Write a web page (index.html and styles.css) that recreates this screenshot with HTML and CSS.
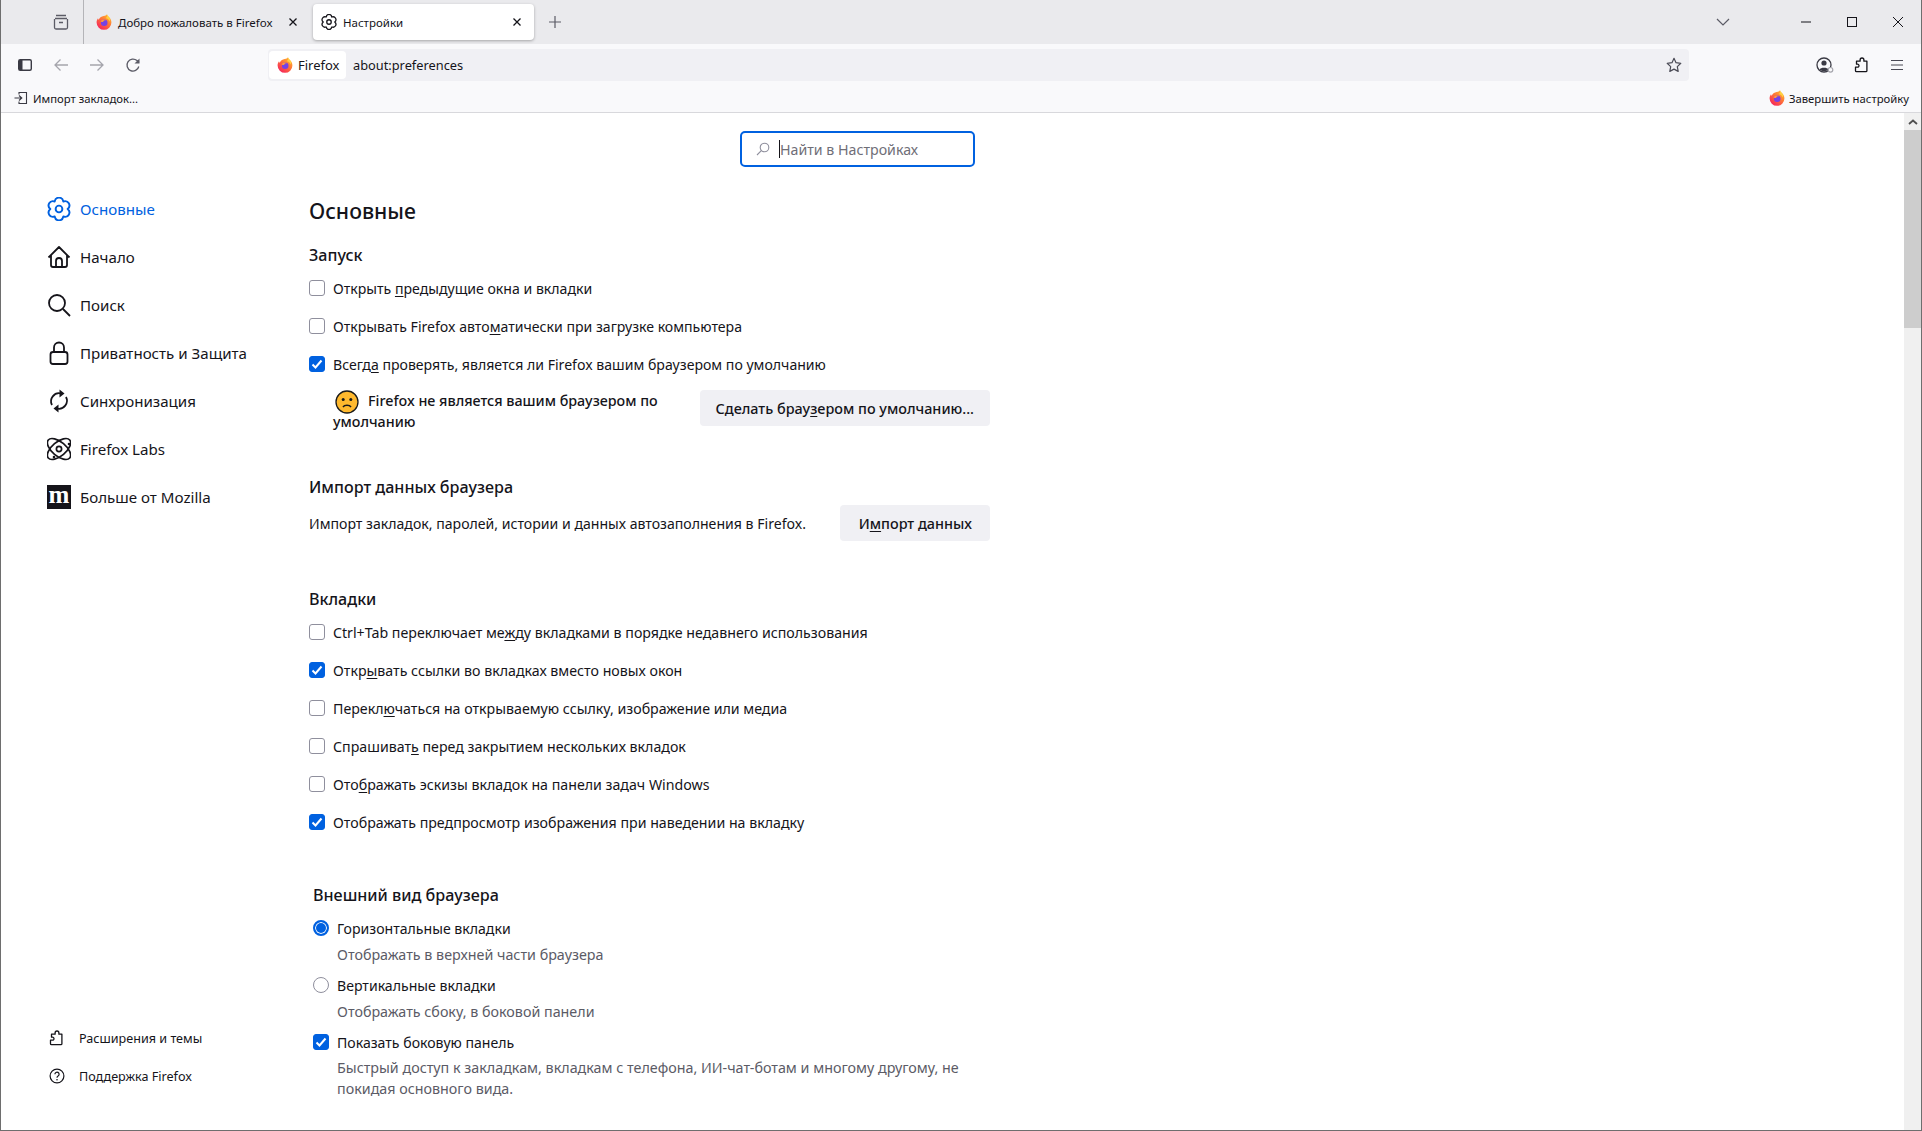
FILE: index.html
```html
<!DOCTYPE html>
<html lang="ru">
<head>
<meta charset="utf-8">
<title>Настройки</title>
<link rel="stylesheet" href="styles.css">
</head>
<body>
<svg class="defs" width="0" height="0" aria-hidden="true">
  <defs>
    <linearGradient id="fxg" x1="0.85" y1="0.1" x2="0.2" y2="0.95">
      <stop offset="0" stop-color="#ffb32e"/><stop offset="0.45" stop-color="#ff7139"/><stop offset="1" stop-color="#f5245c"/>
    </linearGradient>
    <symbol id="fx" viewBox="0 0 16 16">
      <path d="M11 .3c.2 1.5 1.5 2.100 2.400 3.300 1.200 1.300 2 2.900 2 4.800a7.400 7.400 0 1 1-14.800 0c0-1.600.5-3 1.400-4.200.1.700.4 1.200.8 1.600.4-1.700 1.700-2.900 3.300-3.400 1.900-.6 4-.4 4.900-2.100z" fill="url(#fxg)"/>
      <path d="M11 .3c.2 1.700 1.800 2.400 2.600 3.800.8 1.400.6 2.600.2 3.500-.8-2-2.300-3.200-4.300-3.500C11 3.500 11.500 2 11 .3z" fill="#ffd23f"/>
      <circle cx="8.200" cy="8.700" r="3.300" fill="#7542e5"/>
      <path d="M4.500 7.600c1-2 3.800-2.600 5.600-1.300-1.700-.2-2.700.6-2.900 1.400-.9.300-1.900.3-2.700-.1z" fill="#ff9a3c"/>
    </symbol>
    <symbol id="gear" viewBox="0.5 0.5 15 15">
      <path d="M5.300 3.320C5.900.1 10.100.1 10.700 3.320 13.790 2.230 15.890 5.870 13.400 8 15.890 10.130 13.790 13.770 10.700 12.680 10.100 15.900 5.900 15.900 5.300 12.680 2.210 13.770.11 10.130 2.600 8 .11 5.870 2.210 2.230 5.300 3.320z" fill="none" stroke="currentColor" stroke-width="1.200" stroke-linejoin="round"/>
      <circle cx="8" cy="8" r="2.100" fill="none" stroke="currentColor" stroke-width="1.200"/>
    </symbol>
    <symbol id="puzzle" viewBox="0 0 16 16">
      <path d="M1.500 10.500h2a1.500 1.500 0 0 0 0-3h-1V4.500h3.600V3.200a1.900 1.900 0 0 1 3.800 0v1.300h3v9.500a1 1 0 0 1-1 1H2.500a1 1 0 0 1-1-1z" transform="translate(0 -.3)" fill="none" stroke="currentColor" stroke-width="1.300" stroke-linejoin="round"/>
    </symbol>
  </defs>
</svg>
<div class="window">
  <header class="tabbar">
    <div class="tabbar-lead">
      <svg class="ic16" viewBox="0 0 16 16"><path d="M3 1.500h10M2 4.500h12M1.500 5v8.500a1.500 1.500 0 0 0 1.500 1.500h10a1.500 1.500 0 0 0 1.500-1.500V5M6 8.500h4" fill="none" stroke="#5b5b66" stroke-width="1.300"/></svg>
    </div>
    <div class="tab">
      <svg class="fav"><use href="#fx"/></svg>
      <span class="tab-title">Добро пожаловать в Firefox</span>
      <svg class="tab-x" viewBox="0 0 10 10"><path d="M1.500 1.500l7 7M8.500 1.500l-7 7" stroke="#15141a" stroke-width="1.300"/></svg>
    </div>
    <div class="tab tab-active">
      <svg class="fav"><use href="#gear"/></svg>
      <span class="tab-title">Настройки</span>
      <svg class="tab-x" viewBox="0 0 10 10"><path d="M1.500 1.500l7 7M8.500 1.500l-7 7" stroke="#15141a" stroke-width="1.300"/></svg>
    </div>
    <svg class="newtab" viewBox="0 0 14 14"><path d="M7 1v12M1 7h12" stroke="#5b5b66" stroke-width="1.200"/></svg>
    <div class="spacer"></div>
    <svg class="tablist" viewBox="0 0 14 8"><path d="M1 1l6 6 6-6" fill="none" stroke="#5b5b66" stroke-width="1.200"/></svg>
    <svg class="win" viewBox="0 0 10 10"><path d="M0 5h10" stroke="#15141a"/></svg>
    <svg class="win" viewBox="0 0 10 10"><rect x=".5" y=".5" width="9" height="9" fill="none" stroke="#15141a"/></svg>
    <svg class="win win-close" viewBox="0 0 10 10"><path d="M0 0l10 10M10 0L0 10" stroke="#15141a"/></svg>
  </header>

  <nav class="navbar">
    <svg class="nav-ic nav-side" viewBox="0 0 16 16"><rect x="1.700" y="2.700" width="12.600" height="10.600" rx="1.500" fill="none" stroke="#3a3a44" stroke-width="1.400"/><rect x="2" y="3" width="3.500" height="10" fill="#3a3a44"/></svg>
    <svg class="nav-ic nav-back" viewBox="0 0 16 16"><path d="M15 8H2M7.500 2.500L2 8l5.500 5.500" fill="none" stroke="#a5a5ac" stroke-width="1.300"/></svg>
    <svg class="nav-ic nav-fwd" viewBox="0 0 16 16"><path d="M1 8h13M8.500 2.500L14 8l-5.500 5.500" fill="none" stroke="#a5a5ac" stroke-width="1.300"/></svg>
    <svg class="nav-ic nav-reload" viewBox="0 0 16 16"><path d="M13.800 9.500A6 6 0 1 1 12 3.600L14 5.500" fill="none" stroke="#5b5b66" stroke-width="1.300"/><path d="M14.500 1.500v5h-5z" fill="#5b5b66"/></svg>
    <div class="urlbar">
      <div class="identity"><svg class="fav"><use href="#fx"/></svg><span>Firefox</span></div>
      <span class="url">about:preferences</span>
      <div class="spacer"></div>
      <svg class="nav-ic star" viewBox="0 0 16 16"><path d="M8 1.300l2 4.400 4.800.6-3.500 3.300.9 4.800L8 12.100l-4.200 2.300.9-4.800L1.200 6.300 6 5.700z" fill="none" stroke="#4a4a55" stroke-width="1.200" stroke-linejoin="round"/></svg>
    </div>
    <div class="spacer"></div>
    <svg class="nav-ic account" viewBox="0 0 18 16"><circle cx="8" cy="8" r="7" fill="none" stroke="#3a3a44" stroke-width="1.300"/><circle cx="8" cy="6" r="2.600" fill="#3a3a44"/><path d="M3.500 12.500c1-2.300 8-2.300 9 0-2 2-7 2-9 0z" fill="#3a3a44"/><circle cx="14.500" cy="12.800" r="2.300" fill="#f9f9fb" stroke="#a5a5ac" stroke-width="1.200"/></svg>
    <svg class="nav-ic ext"><use href="#puzzle"/></svg>
    <svg class="nav-ic menu" viewBox="0 0 14 14"><path d="M1 2.500h12M1 7h12M1 11.500h12" stroke="#4a4a55" stroke-width="1.200"/></svg>
  </nav>

  <div class="bookmarks">
    <svg class="bm-ic" viewBox="0 0 14 14"><path d="M5 3.500V1.500h7.500v11H5v-2M.5 7h7M5 4.500L7.800 7 5 9.500" fill="none" stroke="#3a3a44" stroke-width="1.100"/></svg>
    <span>Импорт закладок...</span>
    <div class="spacer"></div>
    <svg class="fav"><use href="#fx"/></svg>
    <span class="bm-finish">Завершить настройку</span>
  </div>

  <div class="main">
    <aside class="sidebar">
      <a class="cat cat-active"><svg class="cat-ic"><use href="#gear"/></svg><span>Основные</span></a>
      <a class="cat"><svg class="cat-ic" viewBox="0 0 24 24"><path d="M1.500 12.500L12 2l10.500 10.500M4 10v10a2 2 0 0 0 2 2h12a2 2 0 0 0 2-2V10M9 22v-6a3 3 0 0 1 6 0v6" fill="none" stroke="currentColor" stroke-width="1.800" stroke-linejoin="round"/></svg><span>Начало</span></a>
      <a class="cat"><svg class="cat-ic" viewBox="0 0 24 24"><circle cx="10" cy="10" r="8" fill="none" stroke="currentColor" stroke-width="1.800"/><path d="M16 16l7 7" stroke="currentColor" stroke-width="1.800"/></svg><span>Поиск</span></a>
      <a class="cat"><svg class="cat-ic" viewBox="0 0 24 24"><path d="M7 11V6.500a5 5 0 0 1 10 0V11" fill="none" stroke="currentColor" stroke-width="1.800"/><rect x="3.500" y="11" width="17" height="12" rx="2.500" fill="none" stroke="currentColor" stroke-width="1.800"/></svg><span>Приватность и Защита</span></a>
      <a class="cat"><svg class="cat-ic" viewBox="0 0 24 24"><path d="M5 16a8 8 0 0 1 9-11.500M19 8a8 8 0 0 1-9 11.500" fill="none" stroke="currentColor" stroke-width="1.800"/><path d="M12.500 .5l5 4-5 4zM11.500 15.500l-5 4 5 4z" fill="currentColor"/></svg><span>Синхронизация</span></a>
      <a class="cat"><svg class="cat-ic" viewBox="0 0 24 24"><g fill="none" stroke="currentColor" stroke-width="1.700"><ellipse cx="12" cy="12" rx="14" ry="7" transform="rotate(40 12 12)"/><ellipse cx="12" cy="12" rx="14" ry="7" transform="rotate(-40 12 12)"/><circle cx="12" cy="12" r="2.600"/></g><circle cx="22" cy="7" r="1.300" fill="currentColor"/><circle cx="7" cy="20" r="1.300" fill="currentColor"/></svg><span>Firefox Labs</span></a>
      <a class="cat"><span class="moz">m</span><span>Больше от Mozilla</span></a>
      <div class="side-foot">
        <a class="foot"><svg class="foot-ic"><use href="#puzzle"/></svg><span>Расширения и темы</span></a>
        <a class="foot"><svg class="foot-ic" viewBox="0 0 16 16"><circle cx="8" cy="8" r="6.900" fill="none" stroke="currentColor" stroke-width="1.200"/><path d="M5.900 6.200a2.100 2.100 0 1 1 3.200 1.800c-.8.500-1.100.9-1.100 1.700" fill="none" stroke="currentColor" stroke-width="1.200"/><circle cx="8" cy="11.700" r=".8" fill="currentColor"/></svg><span>Поддержка Firefox</span></a>
      </div>
    </aside>

    <section class="content">
      <div class="search">
        <svg class="search-ic" viewBox="0 0 14 14"><circle cx="8.500" cy="5.500" r="4.300" fill="none" stroke="#8f8f9d" stroke-width="1.100"/><path d="M5.300 8.700L1 13" stroke="#8f8f9d" stroke-width="1.100"/></svg>
        <span class="caret"></span>
        <span class="placeholder">Найти в Настройках</span>
      </div>

      <h1 class="page-title">Основные</h1>

      <h2 class="sec sec-start">Запуск</h2>
      <div class="rows rows-start">
        <label class="row"><span class="cb"></span><span>Открыть <u>п</u>редыдущие окна и вкладки</span></label>
        <label class="row"><span class="cb"></span><span>Открывать Firefox авто<u>м</u>атически при загрузке компьютера</span></label>
        <label class="row"><span class="cb cb-on"><svg viewBox="0 0 16 16"><path d="M3.500 8.500l3 3 6-7" fill="none" stroke="#fff" stroke-width="2"/></svg></span><span>Всегд<u>а</u> проверять, является ли Firefox вашим браузером по умолчанию</span></label>
      </div>
      <div class="note-row">
        <div class="note"><svg class="emoji" viewBox="0 0 24 24"><circle cx="12" cy="12" r="11" fill="#ffb92e" stroke="#1a1a1a" stroke-width="1.300"/><circle cx="8.200" cy="9.500" r="1.500" fill="#1a1a1a"/><circle cx="15.800" cy="9.500" r="1.500" fill="#1a1a1a"/><path d="M8 17c1.500-2.400 6.500-2.400 8 0" fill="none" stroke="#1a1a1a" stroke-width="1.500"/></svg><b>Firefox не является вашим браузером по умолчанию</b></div>
        <span class="btn">Сделать брау<u>з</u>ером по умолчанию...</span>
      </div>

      <h2 class="sec sec-import">Импорт данных браузера</h2>
      <div class="import-row">
        <span>Импорт закладок, паролей, истории и данных автозаполнения в Firefox.</span>
        <span class="btn btn-import">И<u>м</u>порт данных</span>
      </div>

      <h2 class="sec sec-tabs">Вкладки</h2>
      <div class="rows rows-tabs">
        <label class="row"><span class="cb"></span><span>Ctrl+Tab переключает ме<u>ж</u>ду вкладками в порядке недавнего использования</span></label>
        <label class="row"><span class="cb cb-on"><svg viewBox="0 0 16 16"><path d="M3.500 8.500l3 3 6-7" fill="none" stroke="#fff" stroke-width="2"/></svg></span><span>Откр<u>ы</u>вать ссылки во вкладках вместо новых окон</span></label>
        <label class="row"><span class="cb"></span><span>Перекл<u>ю</u>чаться на открываемую ссылку, изображение или медиа</span></label>
        <label class="row"><span class="cb"></span><span>Спрашиват<u>ь</u> перед закрытием нескольких вкладок</span></label>
        <label class="row"><span class="cb"></span><span>Ото<u>б</u>ражать эскизы вкладок на панели задач Windows</span></label>
        <label class="row"><span class="cb cb-on"><svg viewBox="0 0 16 16"><path d="M3.500 8.500l3 3 6-7" fill="none" stroke="#fff" stroke-width="2"/></svg></span><span>Отображать предпросмотр изображения при наведении на вкладку</span></label>
      </div>

      <div class="appearance">
        <h2 class="sec sec-look">Внешний вид браузера</h2>
        <label class="opt opt-first"><span class="rd rd-on"></span><span>Горизонтальные вкладки</span></label>
        <p class="sub">Отображать в верхней части браузера</p>
        <label class="opt"><span class="rd"></span><span>Вертикальные вкладки</span></label>
        <p class="sub">Отображать сбоку, в боковой панели</p>
        <label class="opt opt-last"><span class="cb cb-on"><svg viewBox="0 0 16 16"><path d="M3.500 8.500l3 3 6-7" fill="none" stroke="#fff" stroke-width="2"/></svg></span><span>Показать боковую панель</span></label>
        <p class="sub sub-last">Быстрый доступ к закладкам, вкладкам с телефона, ИИ-чат-ботам и многому другому, не покидая основного вида.</p>
      </div>
    </section>

    <div class="scrollbar">
      <div class="sb-up"><svg viewBox="0 0 10 6"><path d="M1 5l4-3.500L9 5" fill="none" stroke="#505050" stroke-width="1.800"/></svg></div>
      <div class="sb-thumb"></div>
    </div>
  </div>
</div>
</body>
</html>
```

FILE: styles.css
```css
* { box-sizing: border-box; }
html, body { margin: 0; padding: 0; }
body {
  font-family: "Noto Sans", "Open Sans", sans-serif;
  font-size: 14.1px;
  color: #15141a;
  background: #fff;
  overflow: hidden;
}
.defs { position: absolute; }
.spacer { flex: 1; }
u { text-underline-offset: 2px; }

.window {
  height: 1131px;
  width: 1922px;
  border: 1px solid #6e6e6e;
  border-top: 0;
  display: flex;
  flex-direction: column;
  overflow: hidden;
}

/* tab strip */
.tabbar {
  height: 44px;
  background: #eaeaed;
  display: flex;
  align-items: center;
  font-size: 11.5px;
  flex: none;
}
.tabbar-lead {
  width: 83px;
  height: 44px;
  padding-left: 52px;
  display: flex;
  align-items: center;
  border-right: 1px solid #b4b4b8;
}
.ic16 { width: 16px; height: 16px; }
.tab {
  width: 216px;
  height: 36px;
  margin-left: 8px;
  padding: 0 10px 0 4px;
  border-radius: 4px;
  display: flex;
  align-items: center;
  gap: 6px;
}
.tab + .tab {
  width: 221px;
  margin-left: 5px;
  padding-left: 8px;
  padding-right: 12px;
}
.tab-active { background: #fff; box-shadow: 0 1px 3px rgba(0,0,0,.3); }
.tab-title { flex: 1; white-space: nowrap; }
.fav { width: 16px; height: 16px; flex: none; }
.tab-x { width: 10px; height: 10px; flex: none; }
.newtab { width: 14px; height: 14px; margin-left: 14px; }
.tablist { width: 14px; height: 8px; margin-right: 71px; }
.win { width: 10px; height: 10px; margin-right: 36px; }
.win-close { margin-right: 18px; }

/* navigation */
.navbar {
  height: 44px;
  padding-bottom: 3px;
  background: #f9f9fb;
  display: flex;
  align-items: center;
  flex: none;
}
.nav-ic { width: 16px; height: 16px; flex: none; }
.nav-side { margin-left: 16px; }
.nav-back { margin-left: 20px; }
.nav-fwd { margin-left: 20px; }
.nav-reload { margin-left: 20px; }
.urlbar {
  width: 1421px;
  height: 32px;
  margin-left: 127px;
  background: #f0f0f4;
  border-radius: 4px;
  display: flex;
  align-items: center;
  padding-left: 1px;
  padding-right: 7px;
}
.identity {
  background: #fff;
  border-radius: 4px;
  height: 28px;
  width: 77px;
  display: flex;
  align-items: center;
  gap: 5px;
  padding-left: 8px;
  font-size: 13px;
}
.url { margin-left: 7px; font-size: 12.8px; }
.account { width: 18px; margin-right: 20px; }
.ext { margin-right: 20px; }
.menu { width: 14px; height: 14px; margin-right: 17px; }

/* bookmarks */
.bookmarks {
  height: 25px;
  padding: 0 12px 4px 13px;
  background: #f9f9fb;
  border-bottom: 1px solid #d8d8dc;
  display: flex;
  align-items: center;
  font-size: 11.3px;
  flex: none;
}
.bm-ic { width: 14px; height: 14px; margin-right: 5px; }
.bm-finish { margin-left: 4px; }

/* main */
.main { flex: 1; display: flex; min-height: 0; }
.sidebar {
  width: 308px;
  flex: none;
  display: flex;
  flex-direction: column;
  padding: 72px 0 35px 46px;
  font-size: 15.1px;
}
.cat {
  height: 48px;
  display: flex;
  align-items: center;
  gap: 9px;
  flex: none;
}
.cat-active { color: #0061e0; }
.cat-ic { width: 24px; height: 24px; flex: none; }
.moz {
  width: 24px;
  height: 24px;
  background: #15141a;
  color: #fff;
  font: bold 25px/20px "Liberation Serif", serif;
  text-align: center;
}
.side-foot { margin-top: auto; font-size: 12.6px; }
.foot {
  height: 38px;
  display: flex;
  align-items: center;
  gap: 14px;
  padding-left: 2px;
}
.foot-ic { width: 16px; height: 16px; flex: none; }

.content { flex: 1; padding-top: 18px; min-width: 0; }
.search {
  width: 235px;
  height: 36px;
  margin-left: 431px;
  border: 2px solid #0061e0;
  border-radius: 5px;
  display: flex;
  align-items: center;
  padding-left: 14px;
  font-size: 14.2px;
}
.search-ic { width: 14px; height: 14px; margin-right: 9px; }
.caret { width: 1px; height: 18px; background: #15141a; }
.placeholder { color: #6f6e77; }

.page-title {
  margin: 29px 0 0;
  height: 30px;
  line-height: 30px;
  font-size: 21.2px;
  font-weight: 500;
}
.sec {
  margin: 0;
  height: 24px;
  line-height: 24px;
  font-size: 16.1px;
  font-weight: 500;
}
.sec-start { margin-top: 17px; }
.sec-import { margin-top: 43px; }
.sec-tabs { margin-top: 46px; }
.rows-start { margin-top: 2px; }
.rows-tabs { margin-top: 2px; font-size: 14.2px; }
.row {
  height: 38px;
  display: flex;
  align-items: center;
  gap: 8px;
  width: 681px;
}
.cb {
  width: 16px;
  height: 16px;
  flex: none;
  border: 1px solid #8f8f9d;
  border-radius: 3px;
  background: #fff;
}
.cb svg { display: block; width: 16px; height: 16px; margin: -1px; }
.cb-on { background: #0061e0; border-color: #0061e0; }
.note-row {
  margin-top: 7px;
  padding-left: 24px;
  width: 681px;
  display: flex;
  align-items: flex-start;
  justify-content: space-between;
}
.note { width: 350px; line-height: 21px; height: 42px; }
.note b { font-weight: 500; font-size: 14.3px; }
.emoji { width: 24px; height: 24px; margin: -6px 9px -6px 2px; vertical-align: middle; }
.btn {
  height: 36px;
  padding: 0 16px;
  background: #f0f0f4;
  border-radius: 4px;
  display: inline-flex;
  align-items: center;
  font-size: 14.4px;
  font-weight: 500;
  white-space: pre;
}
.btn-import { padding: 0 18px 0 19px; }
.import-row {
  margin-top: 6px;
  width: 681px;
  display: flex;
  align-items: center;
  justify-content: space-between;
}
.appearance { margin-top: 42px; padding-left: 4px; width: 681px; }
.opt { display: flex; align-items: center; gap: 8px; height: 24px; }
.opt-first { margin-top: 9px; }
.rd {
  width: 16px;
  height: 16px;
  flex: none;
  border: 1px solid #8f8f9d;
  border-radius: 50%;
  background: #fff;
}
.rd-on { border: 2px solid #0061e0; box-shadow: inset 0 0 0 1px #fff; background: #0061e0; }
.sub {
  margin: 4px 0 8px;
  padding-left: 24px;
  line-height: 21px;
  color: #5b5b66;
  font-size: 14.3px;
}
.opt-last { margin-top: 7px; }
.sub-last { margin-top: 3px; }

/* scrollbar */
.scrollbar {
  width: 17px;
  flex: none;
  background: #f0f0f0;
}
.sb-up { height: 17px; display: flex; align-items: center; justify-content: center; }
.sb-up svg { width: 10px; height: 6px; }
.sb-thumb { height: 198px; background: #cdcdcd; }
```
